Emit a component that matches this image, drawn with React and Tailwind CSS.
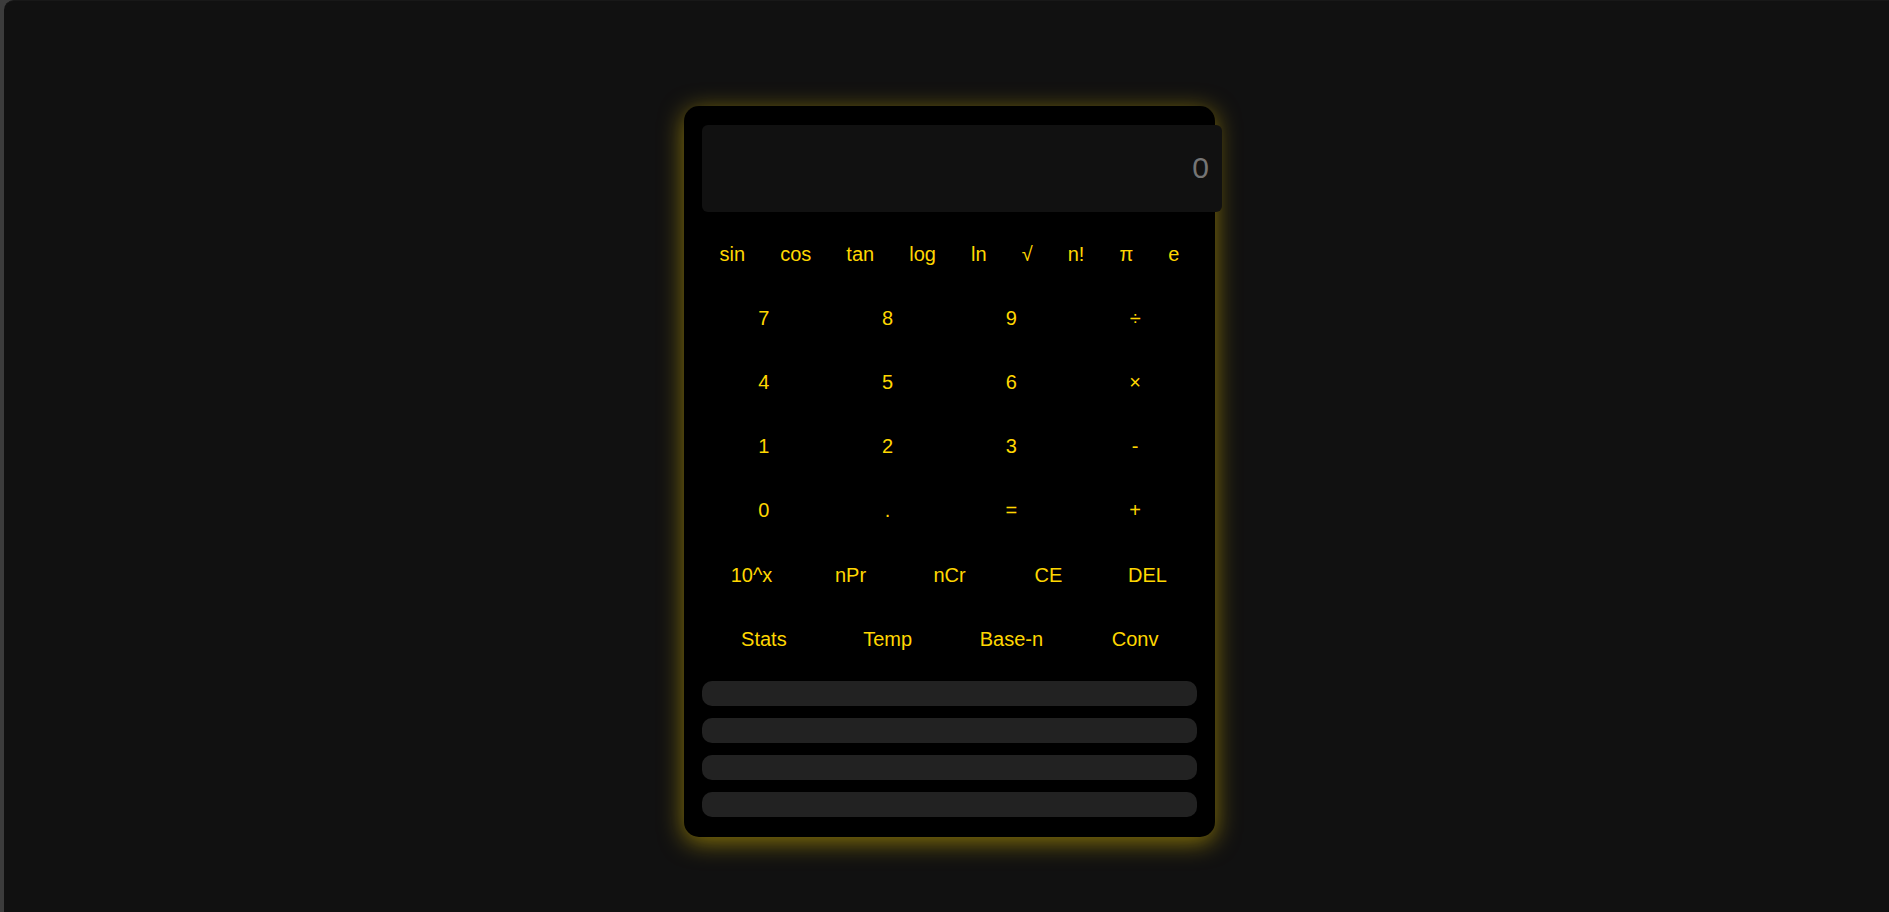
import { useState } from "react";

const functionKeys = ["sin", "cos", "tan", "log", "ln", "√", "n!", "π", "e"];
const numberRows = [
  ["7", "8", "9", "÷"],
  ["4", "5", "6", "×"],
  ["1", "2", "3", "-"],
  ["0", ".", "=", "+"],
];
const extraKeys = ["10^x", "nPr", "nCr", "CE", "DEL"];
const modeKeys = ["Stats", "Temp", "Base-n", "Conv"];

function KeyRow({ keys, onPress, fit = "flex-1" }) {
  return (
    <div className="flex">
      {keys.map((key) => (
        <button
          key={key}
          type="button"
          onClick={() => onPress(key)}
          className={`h-16 cursor-pointer px-[17px] text-center text-xl text-[#ffd700] ${fit}`}
        >
          {key}
        </button>
      ))}
    </div>
  );
}

export default function App() {
  const [value, setValue] = useState("");

  const press = (key) => {
    if (key === "CE") setValue("");
    else if (key === "DEL") setValue((v) => v.slice(0, -1));
    else if (/^[0-9.+\-×÷]$/.test(key)) setValue((v) => v + key);
  };

  return (
    <div className="min-h-screen bg-[#3c3c3c] pl-1 font-['Liberation_Sans',Arial,sans-serif]">
      <div className="flex min-h-screen items-start justify-center rounded-tl-[10px] border-t border-[#181818] bg-[#111111] pt-[105px] pb-8 pl-[6px]">
        <main className="w-[531px] rounded-[15px] bg-black px-[18px] pt-[19px] pb-5 shadow-[0_5px_25px_rgba(255,215,0,0.5)]">
          <input
            type="text"
            aria-label="Display"
            placeholder="0"
            readOnly
            value={value}
            className="block h-[87px] w-[520px] rounded-md bg-[#111111] px-[13px] pb-[2px] text-right text-3xl text-[#ffd700] outline-none placeholder:text-[#757575]"
          />
          <div className="mt-[10px] flex flex-col gap-px">
            <div>
              <KeyRow keys={functionKeys} onPress={press} fit="flex-auto" />
              {numberRows.map((row) => (
                <KeyRow key={row[0]} keys={row} onPress={press} />
              ))}
            </div>
            <div>
              <KeyRow keys={extraKeys} onPress={press} />
              <KeyRow keys={modeKeys} onPress={press} />
            </div>
          </div>
          <div className="mt-[10px] flex flex-col gap-3">
            {modeKeys.map((mode) => (
              <section key={mode} className="h-[25px] rounded-[10px] bg-[#222222]" />
            ))}
          </div>
        </main>
      </div>
    </div>
  );
}
